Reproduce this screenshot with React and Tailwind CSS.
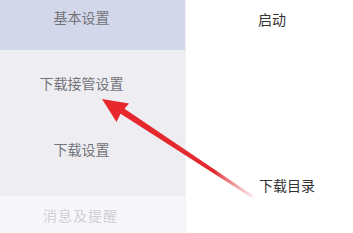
export default function App() {
  const font = { fontFamily: '"Noto Sans CJK SC", "Noto Sans", sans-serif' };
  return (
    <div className="relative w-[353px] h-[233px] overflow-hidden bg-white" style={font}>
      <div className="flex h-full">
        <div className="w-[186px] shrink-0 flex flex-col -mt-[16px] border-r border-[#f3f3f6]">
          <div className="h-[66px] shrink-0 flex items-center justify-center pr-[22px] bg-[#d3d7ea] text-[14px] text-[#737378]">基本设置</div>
          <div className="h-[66px] shrink-0 flex items-center justify-center pr-[22px] pt-[1px] bg-[#ededf2] text-[14px] text-[#737378]">下载接管设置</div>
          <div className="h-[66px] shrink-0 flex items-center justify-center pr-[22px] bg-[#ededf2] text-[14px] text-[#737378]">下载设置</div>
          <div className="h-[66px] shrink-0 flex items-center justify-center pr-[24px] bg-[linear-gradient(#ededf2_14px,#f7f7fa_14px)] text-[14px] tracking-[1px] text-[#d0d0d5]">消息及提醒</div>
        </div>
        <div className="flex-1 flex flex-col">
          <div className="pl-[72px] pt-[9px] text-[14px] text-[#333]">启动</div>
          <div className="pl-[73px] mt-[145px] text-[14px] text-[#333]">下载目录</div>
        </div>
      </div>
      <svg className="absolute left-0 top-0" width="353" height="233" viewBox="0 0 353 233">
        <defs>
          <linearGradient id="g" x1="102" y1="99" x2="252" y2="197" gradientUnits="userSpaceOnUse">
            <stop offset="0" stopColor="#e8262c" />
            <stop offset="0.75" stopColor="#e22a30" />
            <stop offset="1" stopColor="#f3c4c6" stopOpacity="0.5" />
          </linearGradient>
        </defs>
        <polygon points="102,99 129,103.5 124.5,108.7 253,195.5 252,198 120.6,113.8 116.5,122" fill="url(#g)" />
      </svg>
    </div>
  );
}
